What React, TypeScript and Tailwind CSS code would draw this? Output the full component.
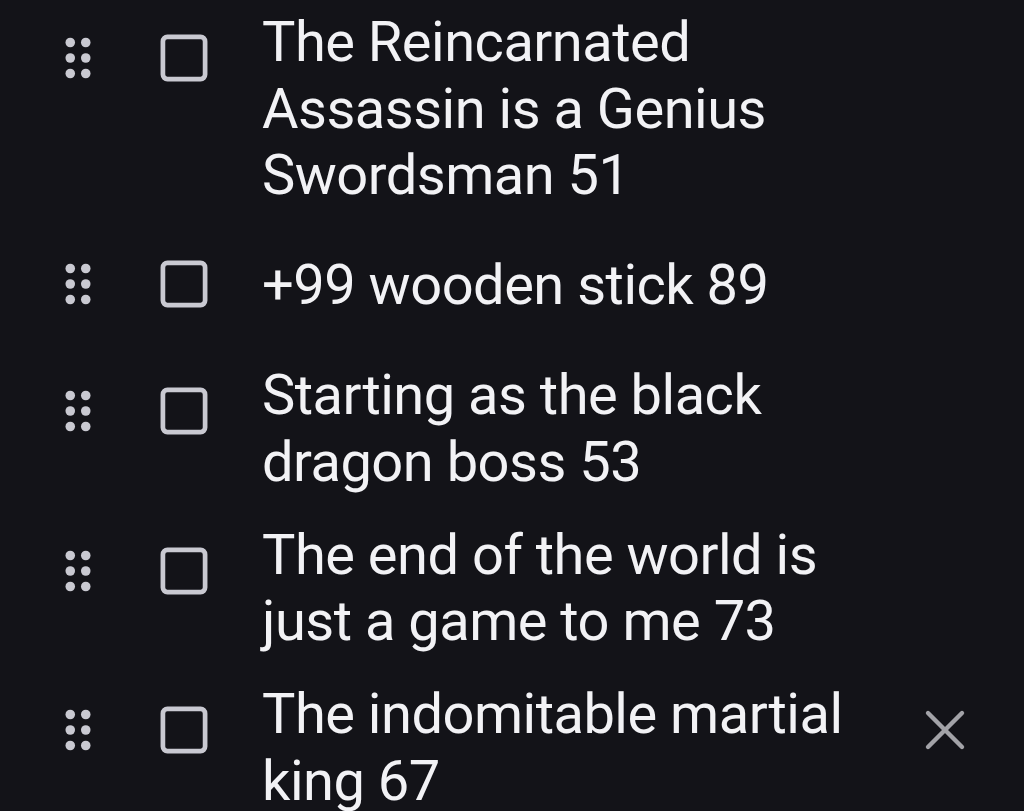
import React from "react";

const items = [
  { text: "The Reincarnated Assassin is a Genius Swordsman 51" },
  { text: "+99 wooden stick 89" },
  { text: "Starting as the black dragon boss 53" },
  { text: "The end of the world is just a game to me 73" },
  { text: "The indomitable martial king 67", focused: true },
];

function DragHandle() {
  return (
    <svg width="62" height="62" viewBox="0 0 24 24" fill="#c9c9d1">
      <circle cx="9" cy="6" r="1.85" />
      <circle cx="15" cy="6" r="1.85" />
      <circle cx="9" cy="12" r="1.85" />
      <circle cx="15" cy="12" r="1.85" />
      <circle cx="9" cy="18" r="1.85" />
      <circle cx="15" cy="18" r="1.85" />
    </svg>
  );
}

function CheckBox() {
  return (
    <svg width="62" height="62" viewBox="0 0 62 62" fill="none">
      <rect x="9.9" y="9.9" width="42.2" height="42.2" rx="4.5" stroke="#c9c9d1" strokeWidth="4.7" />
    </svg>
  );
}

function CloseIcon() {
  return (
    <svg width="60" height="60" viewBox="0 0 60 60" fill="none">
      <path d="M13 13L47 47M47 13L13 47" stroke="#a3a3a8" strokeWidth="4.4" strokeLinecap="round" />
    </svg>
  );
}

export default function App() {
  return (
    <div
      className="w-full h-[811px] overflow-hidden bg-[#131318] pt-[9px]"
      style={{ fontFamily: "Roboto, 'Noto Sans', sans-serif" }}
    >
      <div className="flex flex-col gap-[26px]">
        {items.map((it, i) => (
          <div key={i} className="flex items-start min-h-[101px]">
            <div className="h-[98px] flex items-center pl-[47px] shrink-0">
              <DragHandle />
            </div>
            <div className="h-[98px] flex items-center ml-[43.5px] shrink-0">
              <CheckBox />
            </div>
            <div className="self-center ml-[47.5px] w-[643px] shrink-0 text-[56px] leading-[66.7px] tracking-[-0.5px] text-[#f2f2f5]">
              {it.text}
            </div>
            {it.focused && (
              <div className="h-[98px] flex items-center ml-[10px] shrink-0">
                <CloseIcon />
              </div>
            )}
          </div>
        ))}
      </div>
    </div>
  );
}
